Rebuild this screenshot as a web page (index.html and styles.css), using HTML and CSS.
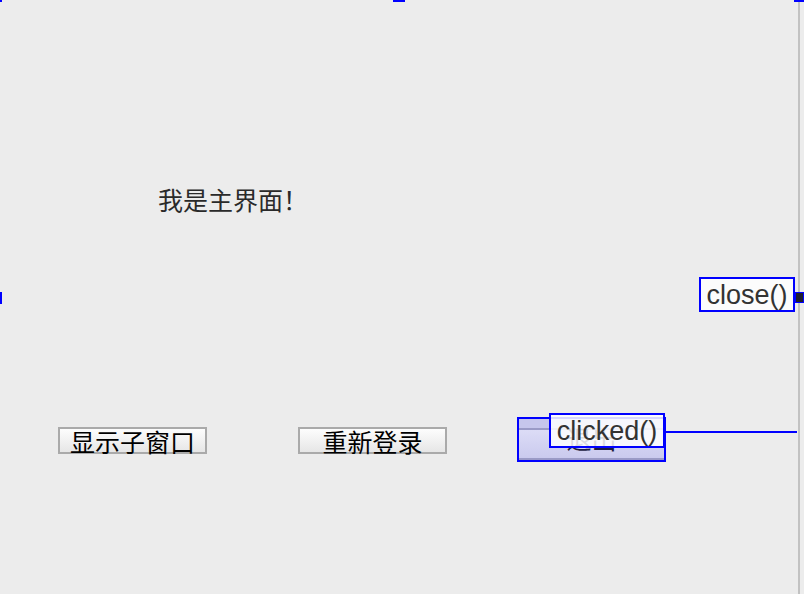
FILE: index.html
```html
<!DOCTYPE html>
<html lang="zh">
<head>
<meta charset="utf-8">
<title>Designer</title>
<link rel="stylesheet" href="styles.css">
</head>
<body>
<div class="canvas">
  <div class="handle h-tl"></div>
  <div class="handle h-top"></div>
  <div class="handle h-tr"></div>
  <div class="handle h-left"></div>
  <div class="form-edge"></div>

  <div class="label">我是主界面！</div>

  <div class="btn btn1">显示子窗口</div>
  <div class="btn btn2">重新登录</div>

  <div class="selected">
    <div class="btn-sel">退出</div>
  </div>

  <div class="conn-line"></div>
  <div class="sig sig-clicked">clicked()</div>
  <div class="sig sig-close">close()</div>
  <div class="endpoint"></div>
</div>
</body>
</html>
```
FILE: styles.css
```css
html, body {
  margin: 0;
  padding: 0;
  background: #ececec;
}
.canvas {
  position: relative;
  width: 804px;
  height: 594px;
  overflow: hidden;
  background: #ececec;
  font-family: "Noto Sans CJK SC", "Liberation Sans", sans-serif;
}
.handle {
  position: absolute;
  background: #0000ff;
}
.h-tl { left: 0; top: 0; width: 2px; height: 2px; }
.h-top { left: 393px; top: 0; width: 12px; height: 2px; }
.h-tr { left: 794px; top: 0; width: 10px; height: 2px; }
.h-left { left: 0; top: 292px; width: 2px; height: 12px; }
.form-edge {
  position: absolute;
  left: 798px;
  top: 2px;
  width: 2px;
  height: 592px;
  background: #c2c2c2;
}
.label {
  position: absolute;
  left: 158px;
  top: 183px;
  font-size: 25px;
  line-height: 32px;
  color: #2a2a2a;
  white-space: nowrap;
}
.btn {
  position: absolute;
  top: 427px;
  width: 145px;
  height: 23px;
  border: 2px solid #aaaaaa;
  background: linear-gradient(#fdfdfd, #e6e6e6);
  color: #000;
  font-size: 25px;
  line-height: 24px;
  text-align: center;
  white-space: nowrap;
}
.btn1 { left: 58px; }
.btn2 { left: 298px; }
.selected {
  position: absolute;
  left: 517px;
  top: 417px;
  width: 145px;
  height: 32px;
  border: 2px solid #0000ff;
  background: #c6c6ec;
  display: flex;
  flex-direction: column;
  padding-top: 9px;
}
.btn-sel {
  height: 28px;
  border-top: 2px solid #9a9ac6;
  border-bottom: 2px solid #9a9ac6;
  background: linear-gradient(#dcdcf6, #cacaee);
  color: #1a1a40;
  font-size: 25px;
  line-height: 17px;
  text-align: center;
  white-space: nowrap;
}
.conn-line {
  position: absolute;
  left: 665px;
  top: 431px;
  width: 132px;
  height: 2px;
  background: #0000ff;
}
.sig {
  position: absolute;
  box-sizing: border-box;
  border: 2px solid #0000ff;
  background: rgba(255, 255, 255, 0.84);
  color: #333;
  font-family: "Liberation Sans", sans-serif;
  font-size: 27px;
  line-height: 33px;
  text-align: center;
  white-space: nowrap;
}
.sig-clicked {
  left: 549px;
  top: 413px;
  width: 116px;
  height: 35px;
}
.sig-close {
  left: 699px;
  top: 277px;
  width: 96px;
  height: 35px;
}
.endpoint {
  position: absolute;
  left: 795px;
  top: 292px;
  width: 9px;
  height: 11px;
  box-sizing: border-box;
  border: 1px solid #0000ff;
  background: #1e1e2e;
}
```
